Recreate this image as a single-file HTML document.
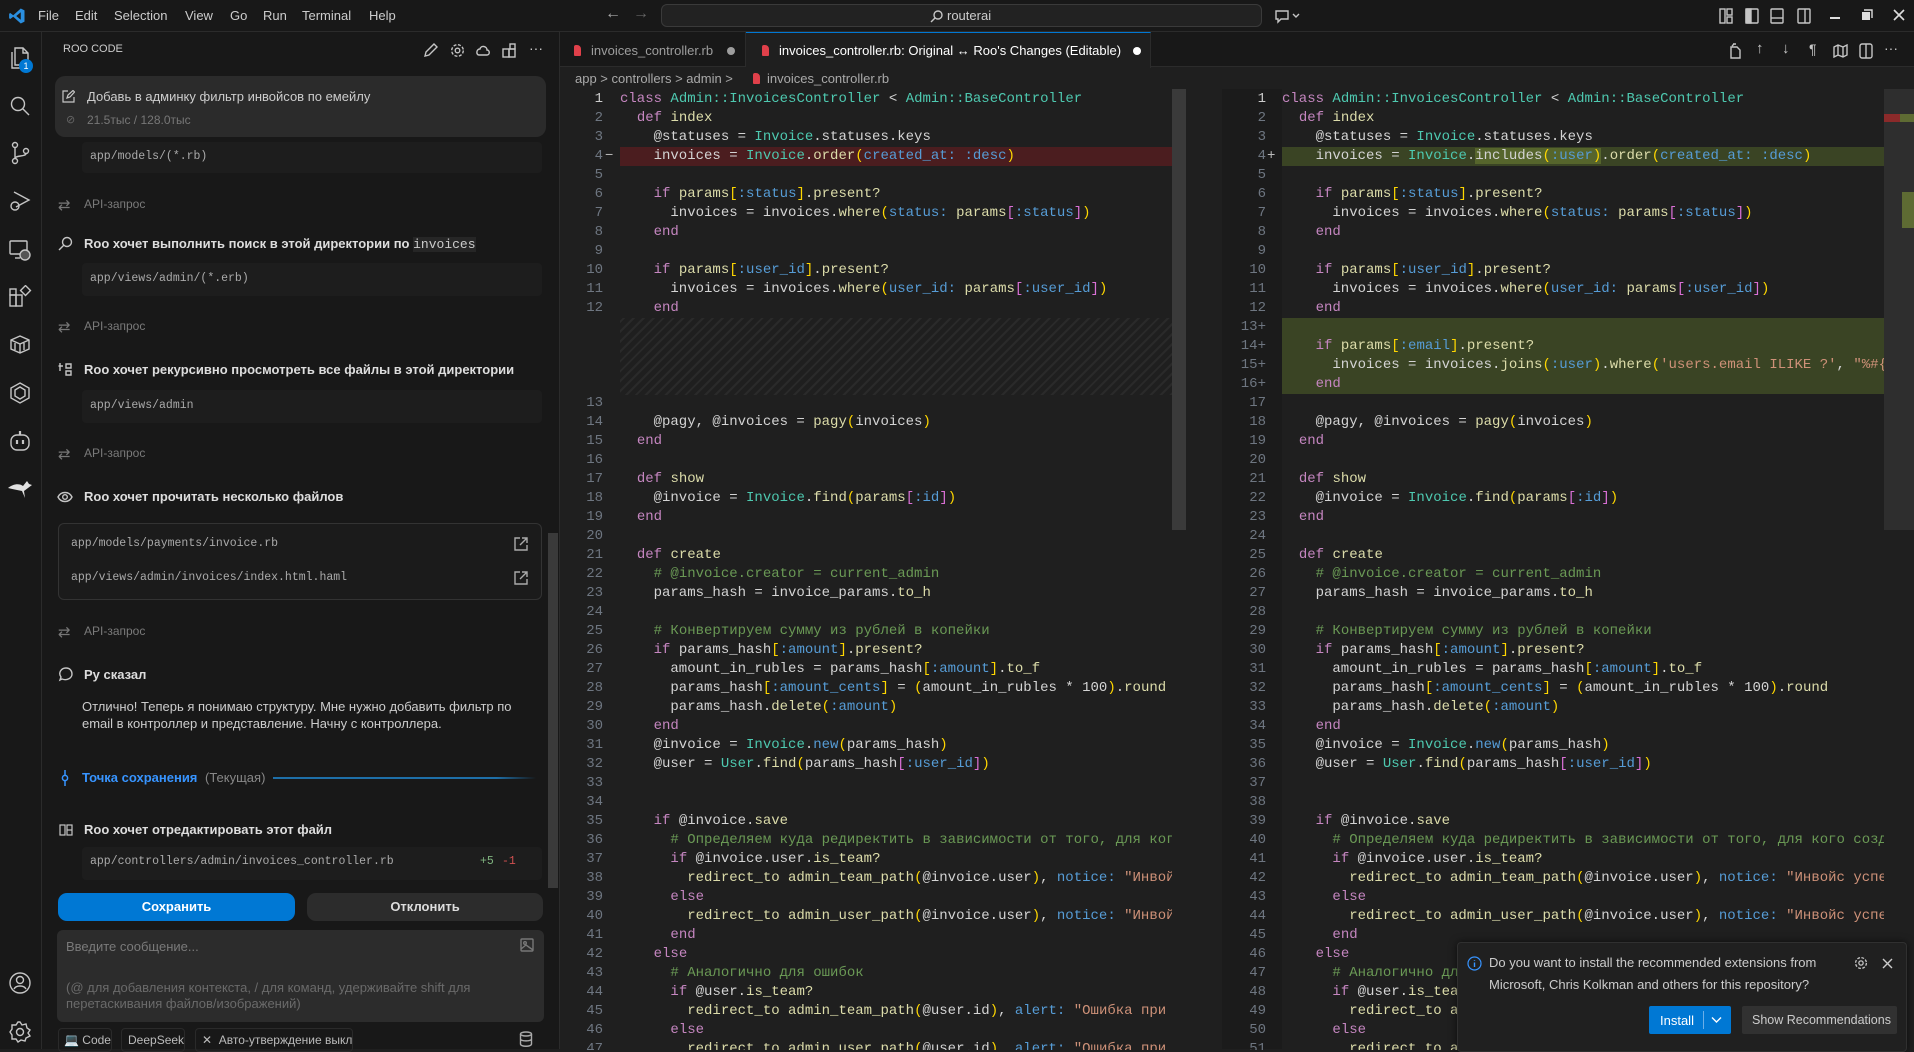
<!DOCTYPE html>
<html><head><meta charset="utf-8">
<style>
*{box-sizing:border-box;margin:0;padding:0}
body{width:1914px;height:1049px;overflow:hidden;background:#1f1f1f;font-family:"Liberation Sans","DejaVu Sans",sans-serif;color:#ccc;position:relative}
.abs{position:absolute}
#title{left:0;top:0;width:1914px;height:32px;background:#181818;border-bottom:1px solid #2b2b2b}
.menu{top:8px;font-size:13px;color:#ccc}
#act{left:0;top:32px;width:42px;height:1017px;background:#181818;border-right:1px solid #2b2b2b}
#side{left:42px;top:32px;width:518px;height:1017px;background:#181818;border-right:1px solid #2b2b2b}
.sb{font-size:13px;color:#ccc;white-space:nowrap}
.api{font-size:12px;color:#7a7a7a}
.hd{font-size:13px;font-weight:bold;color:#ddd}
.box{background:#1d1d1d;border-radius:4px}
.mono{font-family:"Liberation Mono",monospace;font-size:11.5px;color:#aaa}
#tabs{left:560px;top:32px;width:1354px;height:35px;background:#181818;border-bottom:1px solid #2b2b2b}
.pane{position:absolute;top:90px;height:960px;overflow:hidden;font-family:"Liberation Mono","DejaVu Sans Mono",monospace;font-size:14px;color:#d4d4d4}
.r{position:absolute;left:0;right:0;height:19px;line-height:19px;white-space:pre}
.n{position:absolute;left:0;text-align:right;color:#6e7681}
.t{position:absolute}
#L .n{width:43px}#L .t{left:60px}
#R .n{width:44px}#R .t{left:60px}
i{font-style:normal}
.k{color:#c586c0}.c{color:#4ec9b0}.f{color:#dcdcaa}.s{color:#569cd6}.y{color:#ffd700}.p{color:#da70d6}.cm{color:#6a9955}.st{color:#ce9178}
.del{background:#4b1d1f}
.add{background:#3a4424}
u{text-decoration:none;background:#56652c}
.ic{position:absolute;stroke:#c5c5c5;fill:none;stroke-width:1.4}
</style></head><body>

<!-- title bar -->
<div id="title" class="abs">
<svg class="abs" style="left:8px;top:7px" width="18" height="18" viewBox="0 0 24 24"><path d="M17 2 L22 4.5 V19.5 L17 22 L7 13 L3 16 L1.5 15 V9 L3 8 L7 11 L17 2 Z M17 7 L11 12 L17 17 Z" fill="#2a8fe0"/></svg>
<span class="abs menu" style="left:38px">File</span>
<span class="abs menu" style="left:75px">Edit</span>
<span class="abs menu" style="left:114px">Selection</span>
<span class="abs menu" style="left:185px">View</span>
<span class="abs menu" style="left:230px">Go</span>
<span class="abs menu" style="left:263px">Run</span>
<span class="abs menu" style="left:302px">Terminal</span>
<span class="abs menu" style="left:369px">Help</span>
<span class="abs" style="left:605px;top:5px;font-size:16px;color:#aaa">←</span>
<span class="abs" style="left:633px;top:5px;font-size:16px;color:#666">→</span>
<div class="abs" style="left:661px;top:4px;width:601px;height:23px;background:#222;border:1px solid #3a3a3a;border-radius:6px"></div>
<svg class="ic" style="left:930px;top:9px" width="14" height="14" viewBox="0 0 14 14"><circle cx="8" cy="6" r="4"/><path d="M5 9 L1 13"/></svg>
<span class="abs" style="left:947px;top:8px;font-size:13px;color:#ccc">routerai</span>
<svg class="ic" style="left:1274px;top:8px" width="26" height="16" viewBox="0 0 26 16"><path d="M2 3 H14 V11 H7 L4 14 V11 H2 Z"/><path d="M19 6 L22 9 L25 6"/></svg>
<svg class="ic" style="left:1719px;top:8px" width="14" height="16" viewBox="0 0 14 16"><rect x="1" y="1" width="5" height="14"/><rect x="8" y="1" width="5" height="6"/><rect x="8" y="9" width="5" height="6"/></svg>
<svg class="ic" style="left:1745px;top:8px" width="14" height="16" viewBox="0 0 14 16"><rect x="1" y="1" width="12" height="14" rx="1"/><rect x="1" y="1" width="5" height="14" fill="#c5c5c5"/></svg>
<svg class="ic" style="left:1770px;top:8px" width="14" height="16" viewBox="0 0 14 16"><rect x="1" y="1" width="12" height="14" rx="1"/><path d="M1 10 H13"/></svg>
<svg class="ic" style="left:1797px;top:8px" width="14" height="16" viewBox="0 0 14 16"><rect x="1" y="1" width="12" height="14" rx="1"/><path d="M8 1 V15"/></svg>
<div class="abs" style="left:1830px;top:17px;width:10px;height:2px;background:#ddd"></div>
<svg class="abs" style="left:1861px;top:9px" width="12" height="12" viewBox="0 0 12 12"><rect x="1" y="3" width="8" height="8" fill="#ddd"/><path d="M3 1 H11 V9" stroke="#ddd" fill="none" stroke-width="1.4"/></svg>
<svg class="abs" style="left:1893px;top:9px" width="12" height="12" viewBox="0 0 12 12"><path d="M1 1 L11 11 M11 1 L1 11" stroke="#ddd" stroke-width="1.6"/></svg>
</div>

<!-- activity bar -->
<div id="act" class="abs">
<svg class="ic" style="left:7px;top:13px;stroke:#c5c5c5" width="26" height="26" viewBox="0 0 26 26"><path d="M8 3 H16 L21 8 V20 H8 Z M16 3 V8 H21"/><path d="M5 7 V23 H17"/></svg>
<div class="abs" style="left:19px;top:27px;width:14px;height:14px;border-radius:7px;background:#0078d4;color:#fff;font-size:9px;text-align:center;line-height:14px">1</div>
<svg class="ic" style="left:8px;top:62px" width="24" height="24" viewBox="0 0 24 24"><circle cx="10" cy="10" r="6.5"/><path d="M15 15 L21 21"/></svg>
<svg class="ic" style="left:8px;top:109px" width="24" height="24" viewBox="0 0 24 24"><circle cx="7" cy="4" r="2.5"/><circle cx="7" cy="20" r="2.5"/><circle cx="18" cy="10" r="2.5"/><path d="M7 6.5 V17.5 M18 12.5 C18 16 7 14 7 17.5"/></svg>
<svg class="ic" style="left:8px;top:157px" width="24" height="24" viewBox="0 0 24 24"><path d="M6 3 L21 11 L8 18"/><circle cx="7" cy="17" r="4"/></svg>
<svg class="ic" style="left:8px;top:206px" width="24" height="24" viewBox="0 0 24 24"><rect x="2" y="3" width="17" height="13" rx="1"/><path d="M7 20 H12"/><circle cx="17" cy="17" r="5" fill="#555"/></svg>
<svg class="ic" style="left:8px;top:253px" width="24" height="24" viewBox="0 0 24 24"><rect x="2" y="10" width="6" height="11"/><rect x="8" y="10" width="6" height="11"/><rect x="2" y="4" width="6" height="6"/><rect x="14" y="2" width="7" height="7" transform="rotate(45 17.5 5.5)"/></svg>
<svg class="ic" style="left:8px;top:300px" width="24" height="24" viewBox="0 0 24 24"><path d="M3 8 L12 4 L21 8 V17 L12 21 L3 17 Z M3 8 L12 12 L21 8 M12 12 V21 M7 11 V18 M16 11 V18"/></svg>
<svg class="ic" style="left:8px;top:349px" width="24" height="24" viewBox="0 0 24 24"><path d="M12 2 L21 7 V17 L12 22 L3 17 V7 Z"/><path d="M7 9 L12 6 L17 9 V15 L12 18 L7 15 Z"/></svg>
<svg class="ic" style="left:8px;top:397px" width="24" height="24" viewBox="0 0 24 24"><rect x="3" y="6" width="18" height="15" rx="6"/><path d="M12 2 V6 M9 11 V15 M15 11 V15" stroke-width="2.2"/></svg>
<svg class="abs" style="left:7px;top:446px" width="26" height="22" viewBox="0 0 26 22"><path d="M1 10 C6 6 12 5 16 8 L20 3 L22 6 L25 7 L21 10 L17 13 L18 20 L15 13 C10 12 5 11 1 10 Z" fill="#e0e0e0"/></svg>
<svg class="ic" style="left:8px;top:939px" width="24" height="24" viewBox="0 0 24 24"><circle cx="12" cy="12" r="10"/><circle cx="12" cy="9" r="3.5"/><path d="M6 18 C8 14 16 14 18 18"/></svg>
<svg class="ic" style="left:8px;top:988px" width="24" height="24" viewBox="0 0 24 24"><circle cx="12" cy="12" r="3.5"/><path d="M12 2 L14 5 L18 4 L19 8 L22 10 L20 13 L22 16 L18 18 L17 21 L13 20 L10 22 L8 19 L4 19 L4 15 L2 12 L4 9 L4 5 L8 5 L10 2 Z"/></svg>
</div>

<!-- side panel -->
<div id="side" class="abs"></div>
<span class="abs" style="left:63px;top:43px;font-size:11px;color:#ccc">ROO CODE</span>
<svg class="ic" style="left:423px;top:43px" width="15" height="15" viewBox="0 0 15 15"><path d="M2 13 L3 9 L11 1 L14 4 L6 12 Z"/></svg>
<svg class="ic" style="left:450px;top:43px" width="15" height="15" viewBox="0 0 15 15"><circle cx="7.5" cy="7.5" r="2.3"/><circle cx="7.5" cy="7.5" r="5.8" stroke-dasharray="3 1.6"/></svg>
<svg class="ic" style="left:475px;top:44px" width="16" height="13" viewBox="0 0 16 13"><path d="M4 11 H12 C15 11 15 6 12 6 C12 2 6 1 5 5 C1 5 1 11 4 11 Z"/></svg>
<svg class="ic" style="left:502px;top:43px" width="15" height="15" viewBox="0 0 15 15"><rect x="1" y="6" width="6" height="8"/><rect x="7" y="6" width="6" height="8"/><rect x="8" y="1" width="5" height="5"/></svg>
<span class="abs" style="left:529px;top:40px;font-size:14px;color:#ccc">···</span>

<div class="abs" style="left:55px;top:76px;width:491px;height:61px;background:#2b2b2b;border-radius:10px"></div>
<svg class="ic" style="left:62px;top:90px;stroke-width:1.2" width="13" height="13" viewBox="0 0 13 13"><path d="M6 1 H1 V12 H12 V7 M5 8 L6 5 L11 0.5 L12.5 2 L8 7 Z"/></svg>
<span class="abs sb" style="left:87px;top:89px">Добавь в админку фильтр инвойсов по емейлу</span>
<span class="abs" style="left:66px;top:113px;font-size:11px;color:#666">⊘</span>
<span class="abs" style="left:87px;top:113px;font-size:12px;color:#777">21.5тыс / 128.0тыс</span>

<div class="abs box" style="left:82px;top:142px;width:460px;height:31px"></div>
<span class="abs mono" style="left:90px;top:150px">app/models/(*.rb)</span>

<span class="abs" style="left:58px;top:196px;font-size:15px;color:#777">⇄</span>
<span class="abs api" style="left:84px;top:197px">API-запрос</span>

<svg class="ic" style="left:58px;top:236px" width="15" height="15" viewBox="0 0 15 15"><circle cx="9" cy="6" r="4.5"/><path d="M6 9 L1 14"/></svg>
<span class="abs hd" style="left:84px;top:236px">Roo хочет выполнить поиск в этой директории по <span style="font-family:'Liberation Mono',monospace;font-weight:normal;background:#262626;color:#ccc">invoices</span></span>
<div class="abs box" style="left:82px;top:263px;width:460px;height:33px"></div>
<span class="abs mono" style="left:90px;top:272px">app/views/admin/(*.erb)</span>

<span class="abs" style="left:58px;top:318px;font-size:15px;color:#777">⇄</span>
<span class="abs api" style="left:84px;top:319px">API-запрос</span>
<svg class="ic" style="left:58px;top:362px" width="15" height="15" viewBox="0 0 15 15"><path d="M2 1 V9 M0.5 4 H5 M8 2 H13 V6 H8 Z M8 9 H13 V13 H8 Z"/></svg>
<span class="abs hd" style="left:84px;top:362px">Roo хочет рекурсивно просмотреть все файлы в этой директории</span>
<div class="abs box" style="left:82px;top:390px;width:460px;height:33px"></div>
<span class="abs mono" style="left:90px;top:399px">app/views/admin</span>

<span class="abs" style="left:58px;top:445px;font-size:15px;color:#777">⇄</span>
<span class="abs api" style="left:84px;top:446px">API-запрос</span>
<svg class="ic" style="left:57px;top:490px" width="16" height="14" viewBox="0 0 16 14"><path d="M1 7 C4 1 12 1 15 7 C12 13 4 13 1 7 Z"/><circle cx="8" cy="7" r="2.3"/></svg>
<span class="abs hd" style="left:84px;top:489px">Roo хочет прочитать несколько файлов</span>
<div class="abs" style="left:58px;top:523px;width:484px;height:77px;border:1px solid #333;border-radius:6px;background:#1b1b1b"></div>
<span class="abs mono" style="left:71px;top:537px">app/models/payments/invoice.rb</span>
<span class="abs mono" style="left:71px;top:571px">app/views/admin/invoices/index.html.haml</span>
<svg class="ic" style="left:514px;top:537px;stroke:#aaa" width="14" height="14" viewBox="0 0 14 14"><path d="M6 1 H1 V13 H13 V8 M8 1 H13 V6 M13 1 L6 8"/></svg>
<svg class="ic" style="left:514px;top:571px;stroke:#aaa" width="14" height="14" viewBox="0 0 14 14"><path d="M6 1 H1 V13 H13 V8 M8 1 H13 V6 M13 1 L6 8"/></svg>

<span class="abs" style="left:58px;top:623px;font-size:15px;color:#777">⇄</span>
<span class="abs api" style="left:84px;top:624px">API-запрос</span>
<svg class="ic" style="left:58px;top:667px" width="15" height="15" viewBox="0 0 15 15"><path d="M2 13 L3 10 C0 6 3 1 8 1 C12 1 14 4 14 7 C14 11 9 14 4 12 Z"/></svg>
<span class="abs hd" style="left:84px;top:667px">Ру сказал</span>
<span class="abs sb" style="left:82px;top:699px;color:#ccc">Отлично! Теперь я понимаю структуру. Мне нужно добавить фильтр по</span>
<span class="abs sb" style="left:82px;top:716px;color:#ccc">email в контроллер и представление. Начну с контроллера.</span>

<svg class="abs" style="left:61px;top:770px" width="8" height="16" viewBox="0 0 8 16"><path d="M4 0 V16" stroke="#3794ff" stroke-width="1.5"/><circle cx="4" cy="8" r="2.6" fill="#181818" stroke="#3794ff" stroke-width="1.5"/></svg>
<span class="abs" style="left:82px;top:770px;font-size:13px;font-weight:bold;color:#3794ff">Точка сохранения</span>
<span class="abs" style="left:205px;top:770px;font-size:13px;color:#888">(Текущая)</span>
<div class="abs" style="left:273px;top:777px;width:263px;height:2px;background:linear-gradient(90deg,#1e6fa8,#1e6fa8 85%,#181818)"></div>

<svg class="ic" style="left:59px;top:823px;stroke-width:1.2" width="15" height="14" viewBox="0 0 15 14"><rect x="1" y="2" width="5" height="10"/><rect x="8" y="2" width="5" height="10"/><path d="M8 7 H13"/></svg>
<span class="abs hd" style="left:84px;top:822px">Roo хочет отредактировать этот файл</span>
<div class="abs box" style="left:82px;top:847px;width:460px;height:33px"></div>
<span class="abs mono" style="left:90px;top:855px">app/controllers/admin/invoices_controller.rb</span>
<span class="abs mono" style="left:480px;top:855px;color:#7fb37f">+5</span>
<span class="abs mono" style="left:502px;top:855px;color:#d05050">-1</span>

<div class="abs" style="left:58px;top:893px;width:237px;height:28px;background:#0078d4;border-radius:9px;color:#fff;font-size:13px;font-weight:bold;text-align:center;line-height:28px">Сохранить</div>
<div class="abs" style="left:307px;top:893px;width:236px;height:28px;background:#2c2c2c;border-radius:9px;color:#ddd;font-size:13px;font-weight:bold;text-align:center;line-height:28px">Отклонить</div>

<div class="abs" style="left:57px;top:930px;width:487px;height:92px;background:#2c2c2c;border-radius:6px"></div>
<span class="abs" style="left:66px;top:939px;font-size:13px;color:#7a7a7a">Введите сообщение...</span>
<span class="abs" style="left:66px;top:980px;font-size:13px;color:#6a6a6a">(@ для добавления контекста, / для команд, удерживайте shift для</span>
<span class="abs" style="left:66px;top:996px;font-size:13px;color:#6a6a6a">перетаскивания файлов/изображений)</span>
<svg class="ic" style="left:520px;top:938px;stroke:#777" width="14" height="14" viewBox="0 0 14 14"><rect x="1" y="1" width="12" height="12" rx="1"/><circle cx="5" cy="5" r="1.3"/><path d="M1 11 L6 7 L13 12"/></svg>

<div class="abs" style="left:58px;top:1028px;width:54px;height:24px;border:1px solid #2a2a2a;border-radius:4px"></div>
<span class="abs" style="left:64px;top:1033px;font-size:12px;color:#bbb">💻 Code</span>
<div class="abs" style="left:121px;top:1028px;width:64px;height:24px;border:1px solid #2a2a2a;border-radius:4px"></div>
<span class="abs" style="left:128px;top:1033px;font-size:12px;color:#bbb">DeepSeek</span>
<div class="abs" style="left:195px;top:1028px;width:158px;height:24px;border:1px solid #2a2a2a;border-radius:4px"></div>
<span class="abs" style="left:202px;top:1033px;font-size:12px;color:#bbb">✕&nbsp; Авто-утверждение выкл</span>
<svg class="ic" style="left:519px;top:1031px;stroke:#aaa" width="14" height="16" viewBox="0 0 14 16"><ellipse cx="7" cy="3" rx="5.5" ry="2"/><path d="M1.5 3 V13 C1.5 16 12.5 16 12.5 13 V3 M1.5 8 C1.5 10.5 12.5 10.5 12.5 8"/></svg>
<div class="abs" style="left:548px;top:533px;width:10px;height:355px;background:#3a3a3a"></div>

<!-- tabs -->
<div id="tabs" class="abs"></div>
<div class="abs" style="left:560px;top:32px;width:186px;height:35px;border-right:1px solid #2b2b2b"></div>
<div class="abs" style="left:746px;top:32px;width:405px;height:36px;background:#1f1f1f;border-top:1px solid #0078d4;border-right:1px solid #2b2b2b"></div>
<div class="abs" style="left:574px;top:45px;width:7px;height:11px;background:#e0404a;border-radius:2px 4px 1px 1px"></div>
<span class="abs" style="left:591px;top:43px;font-size:13px;color:#9d9d9d">invoices_controller.rb</span>
<div class="abs" style="left:727px;top:47px;width:8px;height:8px;border-radius:4px;background:#9d9d9d"></div>
<div class="abs" style="left:762px;top:45px;width:7px;height:11px;background:#e0404a;border-radius:2px 4px 1px 1px"></div>
<span class="abs" style="left:779px;top:43px;font-size:13px;color:#fff">invoices_controller.rb: Original ↔ Roo's Changes (Editable)</span>
<div class="abs" style="left:1133px;top:47px;width:8px;height:8px;border-radius:4px;background:#fff"></div>
<svg class="ic" style="left:1728px;top:43px" width="14" height="16" viewBox="0 0 14 16"><path d="M3 4 H9 L12 7 V15 H3 Z M5 1 H8 M6 1 L4 3"/></svg>
<span class="abs" style="left:1756px;top:40px;font-size:15px;color:#c5c5c5">↑</span>
<span class="abs" style="left:1782px;top:40px;font-size:15px;color:#c5c5c5">↓</span>
<span class="abs" style="left:1809px;top:41px;font-size:14px;color:#c5c5c5">¶</span>
<svg class="ic" style="left:1833px;top:44px" width="15" height="14" viewBox="0 0 15 14"><path d="M1 3 L5 1 L10 3 L14 1 V11 L10 13 L5 11 L1 13 Z M5 1 V11 M10 3 V13"/></svg>
<svg class="ic" style="left:1859px;top:43px" width="14" height="16" viewBox="0 0 14 16"><rect x="1" y="1" width="12" height="14" rx="2"/><path d="M7 1 V15"/></svg>
<span class="abs" style="left:1884px;top:40px;font-size:14px;color:#c5c5c5">···</span>

<!-- breadcrumb -->
<span class="abs" style="left:575px;top:71px;font-size:13px;color:#a9a9a9">app &gt; controllers &gt; admin &gt;</span>
<div class="abs" style="left:753px;top:73px;width:7px;height:11px;background:#e0404a;border-radius:2px 4px 1px 1px"></div>
<span class="abs" style="left:767px;top:71px;font-size:13px;color:#a9a9a9">invoices_controller.rb</span>

<!-- overview/pane chrome -->
<div class="abs" style="left:1186px;top:89px;width:36px;height:960px;background:#1f1f1f"></div>
<div class="abs" style="left:1172px;top:89px;width:14px;height:441px;background:#3a3a3a"></div>
<div class="abs" style="left:1222px;top:89px;width:60px;height:960px;background:#1b1b1b"></div>
<div class="abs" style="left:1884px;top:89px;width:30px;height:441px;background:#2e2e2e"></div>
<div class="abs" style="left:1884px;top:114px;width:16px;height:8px;background:#8b2a2a"></div>
<div class="abs" style="left:1900px;top:114px;width:14px;height:8px;background:#5e6b33"></div>
<div class="abs" style="left:1902px;top:192px;width:12px;height:36px;background:#5e6b33"></div>

<!-- LEFT pane -->
<div id="L" class="pane" style="left:560px;width:612px">
<div class="r" style="top:0"><span class="n" style="color:#ccc">1</span><span class="t"><i class=k>class</i> <i class=c>Admin::InvoicesController</i> &lt; <i class=c>Admin::BaseController</i></span></div>
<div class="r" style="top:19px"><span class="n">2</span><span class="t">  <i class=k>def</i> <i class=f>index</i></span></div>
<div class="r" style="top:38px"><span class="n">3</span><span class="t">    @statuses = <i class=c>Invoice</i>.statuses.keys</span></div>
<div class="r del" style="top:57px;left:60px"></div>
<div class="r" style="top:57px"><span class="n">4</span><span style="position:absolute;left:45px;color:#bbb">−</span><span class="t">    invoices = <i class=c>Invoice</i>.<i class=f>order</i><i class=y>(</i><i class=s>created_at: :desc</i><i class=y>)</i></span></div>
<div class="r" style="top:76px"><span class="n">5</span></div>
<div class="r" style="top:95px"><span class="n">6</span><span class="t">    <i class=k>if</i> <i class=f>params</i><i class=y>[</i><i class=s>:status</i><i class=y>]</i>.<i class=f>present?</i></span></div>
<div class="r" style="top:114px"><span class="n">7</span><span class="t">      invoices = invoices.<i class=f>where</i><i class=y>(</i><i class=s>status:</i> <i class=f>params</i><i class=p>[</i><i class=s>:status</i><i class=p>]</i><i class=y>)</i></span></div>
<div class="r" style="top:133px"><span class="n">8</span><span class="t">    <i class=k>end</i></span></div>
<div class="r" style="top:152px"><span class="n">9</span></div>
<div class="r" style="top:171px"><span class="n">10</span><span class="t">    <i class=k>if</i> <i class=f>params</i><i class=y>[</i><i class=s>:user_id</i><i class=y>]</i>.<i class=f>present?</i></span></div>
<div class="r" style="top:190px"><span class="n">11</span><span class="t">      invoices = invoices.<i class=f>where</i><i class=y>(</i><i class=s>user_id:</i> <i class=f>params</i><i class=p>[</i><i class=s>:user_id</i><i class=p>]</i><i class=y>)</i></span></div>
<div class="r" style="top:209px"><span class="n">12</span><span class="t">    <i class=k>end</i></span></div>
<div style="position:absolute;top:228px;left:60px;right:0;height:77px;background:repeating-linear-gradient(-45deg,#2a2a2a 0 2px,#1f1f1f 2px 7px)"></div>
<div class="r" style="top:304px"><span class="n">13</span></div>
<div class="r" style="top:323px"><span class="n">14</span><span class="t">    @pagy, @invoices = <i class=f>pagy</i><i class=y>(</i>invoices<i class=y>)</i></span></div>
<div class="r" style="top:342px"><span class="n">15</span><span class="t">  <i class=k>end</i></span></div>
<div class="r" style="top:361px"><span class="n">16</span></div>
<div class="r" style="top:380px"><span class="n">17</span><span class="t">  <i class=k>def</i> <i class=f>show</i></span></div>
<div class="r" style="top:399px"><span class="n">18</span><span class="t">    @invoice = <i class=c>Invoice</i>.<i class=f>find</i><i class=y>(</i><i class=f>params</i><i class=p>[</i><i class=s>:id</i><i class=p>]</i><i class=y>)</i></span></div>
<div class="r" style="top:418px"><span class="n">19</span><span class="t">  <i class=k>end</i></span></div>
<div class="r" style="top:437px"><span class="n">20</span></div>
<div class="r" style="top:456px"><span class="n">21</span><span class="t">  <i class=k>def</i> <i class=f>create</i></span></div>
<div class="r" style="top:475px"><span class="n">22</span><span class="t">    <i class=cm># @invoice.creator = current_admin</i></span></div>
<div class="r" style="top:494px"><span class="n">23</span><span class="t">    params_hash = invoice_params.<i class=f>to_h</i></span></div>
<div class="r" style="top:513px"><span class="n">24</span></div>
<div class="r" style="top:532px"><span class="n">25</span><span class="t">    <i class=cm># Конвертируем сумму из рублей в копейки</i></span></div>
<div class="r" style="top:551px"><span class="n">26</span><span class="t">    <i class=k>if</i> params_hash<i class=y>[</i><i class=s>:amount</i><i class=y>]</i>.<i class=f>present?</i></span></div>
<div class="r" style="top:570px"><span class="n">27</span><span class="t">      amount_in_rubles = params_hash<i class=y>[</i><i class=s>:amount</i><i class=y>]</i>.<i class=f>to_f</i></span></div>
<div class="r" style="top:589px"><span class="n">28</span><span class="t">      params_hash<i class=y>[</i><i class=s>:amount_cents</i><i class=y>]</i> = <i class=y>(</i>amount_in_rubles * 100<i class=y>)</i>.<i class=f>round</i></span></div>
<div class="r" style="top:608px"><span class="n">29</span><span class="t">      params_hash.<i class=f>delete</i><i class=y>(</i><i class=s>:amount</i><i class=y>)</i></span></div>
<div class="r" style="top:627px"><span class="n">30</span><span class="t">    <i class=k>end</i></span></div>
<div class="r" style="top:646px"><span class="n">31</span><span class="t">    @invoice = <i class=c>Invoice</i>.<i class=s>new</i><i class=y>(</i>params_hash<i class=y>)</i></span></div>
<div class="r" style="top:665px"><span class="n">32</span><span class="t">    @user = <i class=c>User</i>.<i class=f>find</i><i class=y>(</i>params_hash<i class=p>[</i><i class=s>:user_id</i><i class=p>]</i><i class=y>)</i></span></div>
<div class="r" style="top:684px"><span class="n">33</span></div>
<div class="r" style="top:703px"><span class="n">34</span></div>
<div class="r" style="top:722px"><span class="n">35</span><span class="t">    <i class=k>if</i> @invoice.<i class=f>save</i></span></div>
<div class="r" style="top:741px"><span class="n">36</span><span class="t">      <i class=cm># Определяем куда редиректить в зависимости от того, для кого создан инвойс</i></span></div>
<div class="r" style="top:760px"><span class="n">37</span><span class="t">      <i class=k>if</i> @invoice.user.<i class=f>is_team?</i></span></div>
<div class="r" style="top:779px"><span class="n">38</span><span class="t">        <i class=f>redirect_to admin_team_path</i><i class=y>(</i>@invoice.user<i class=y>)</i>, <i class=s>notice:</i> <i class=st>"Инвойс успешно создан"</i></span></div>
<div class="r" style="top:798px"><span class="n">39</span><span class="t">      <i class=k>else</i></span></div>
<div class="r" style="top:817px"><span class="n">40</span><span class="t">        <i class=f>redirect_to admin_user_path</i><i class=y>(</i>@invoice.user<i class=y>)</i>, <i class=s>notice:</i> <i class=st>"Инвойс успешно создан"</i></span></div>
<div class="r" style="top:836px"><span class="n">41</span><span class="t">      <i class=k>end</i></span></div>
<div class="r" style="top:855px"><span class="n">42</span><span class="t">    <i class=k>else</i></span></div>
<div class="r" style="top:874px"><span class="n">43</span><span class="t">      <i class=cm># Аналогично для ошибок</i></span></div>
<div class="r" style="top:893px"><span class="n">44</span><span class="t">      <i class=k>if</i> @user.<i class=f>is_team?</i></span></div>
<div class="r" style="top:912px"><span class="n">45</span><span class="t">        <i class=f>redirect_to admin_team_path</i><i class=y>(</i>@user.id<i class=y>)</i>, <i class=s>alert:</i> <i class=st>"Ошибка при создании"</i></span></div>
<div class="r" style="top:931px"><span class="n">46</span><span class="t">      <i class=k>else</i></span></div>
<div class="r" style="top:950px"><span class="n">47</span><span class="t">        <i class=f>redirect_to admin_user_path</i><i class=y>(</i>@user.id<i class=y>)</i>, <i class=s>alert:</i> <i class=st>"Ошибка при создании"</i></span></div>
</div>

<!-- RIGHT pane -->
<div id="R" class="pane" style="left:1222px;width:662px">
<div class="r" style="top:0"><span class="n" style="color:#ccc">1</span><span class="t"><i class=k>class</i> <i class=c>Admin::InvoicesController</i> &lt; <i class=c>Admin::BaseController</i></span></div>
<div class="r" style="top:19px"><span class="n">2</span><span class="t">  <i class=k>def</i> <i class=f>index</i></span></div>
<div class="r" style="top:38px"><span class="n">3</span><span class="t">    @statuses = <i class=c>Invoice</i>.statuses.keys</span></div>
<div class="r add" style="top:57px;left:60px"></div>
<div class="r" style="top:57px"><span class="n">4</span><span style="position:absolute;left:45px;color:#bbb">+</span><span class="t">    invoices = <i class=c>Invoice</i>.<u>includes<i class=y>(</i><i class=s>:user</i><i class=y>)</i></u>.<i class=f>order</i><i class=y>(</i><i class=s>created_at: :desc</i><i class=y>)</i></span></div>
<div class="r" style="top:76px"><span class="n">5</span></div>
<div class="r" style="top:95px"><span class="n">6</span><span class="t">    <i class=k>if</i> <i class=f>params</i><i class=y>[</i><i class=s>:status</i><i class=y>]</i>.<i class=f>present?</i></span></div>
<div class="r" style="top:114px"><span class="n">7</span><span class="t">      invoices = invoices.<i class=f>where</i><i class=y>(</i><i class=s>status:</i> <i class=f>params</i><i class=p>[</i><i class=s>:status</i><i class=p>]</i><i class=y>)</i></span></div>
<div class="r" style="top:133px"><span class="n">8</span><span class="t">    <i class=k>end</i></span></div>
<div class="r" style="top:152px"><span class="n">9</span></div>
<div class="r" style="top:171px"><span class="n">10</span><span class="t">    <i class=k>if</i> <i class=f>params</i><i class=y>[</i><i class=s>:user_id</i><i class=y>]</i>.<i class=f>present?</i></span></div>
<div class="r" style="top:190px"><span class="n">11</span><span class="t">      invoices = invoices.<i class=f>where</i><i class=y>(</i><i class=s>user_id:</i> <i class=f>params</i><i class=p>[</i><i class=s>:user_id</i><i class=p>]</i><i class=y>)</i></span></div>
<div class="r" style="top:209px"><span class="n">12</span><span class="t">    <i class=k>end</i></span></div>
<div style="position:absolute;top:228px;left:60px;right:0;height:76px;background:#3a4424"></div>
<div class="r" style="top:228px"><span class="n">13+</span></div>
<div class="r" style="top:247px"><span class="n">14+</span><span class="t">    <i class=k>if</i> <i class=f>params</i><i class=y>[</i><i class=s>:email</i><i class=y>]</i>.<i class=f>present?</i></span></div>
<div class="r" style="top:266px"><span class="n">15+</span><span class="t">      invoices = invoices.<i class=f>joins</i><i class=y>(</i><i class=s>:user</i><i class=y>)</i>.<i class=f>where</i><i class=y>(</i><i class=st>'users.email ILIKE ?'</i>, <i class=st>"%#{params[:email]}%"</i><i class=y>)</i></span></div>
<div class="r" style="top:285px"><span class="n">16+</span><span class="t">    <i class=k>end</i></span></div>
<div class="r" style="top:304px"><span class="n">17</span></div>
<div class="r" style="top:323px"><span class="n">18</span><span class="t">    @pagy, @invoices = <i class=f>pagy</i><i class=y>(</i>invoices<i class=y>)</i></span></div>
<div class="r" style="top:342px"><span class="n">19</span><span class="t">  <i class=k>end</i></span></div>
<div class="r" style="top:361px"><span class="n">20</span></div>
<div class="r" style="top:380px"><span class="n">21</span><span class="t">  <i class=k>def</i> <i class=f>show</i></span></div>
<div class="r" style="top:399px"><span class="n">22</span><span class="t">    @invoice = <i class=c>Invoice</i>.<i class=f>find</i><i class=y>(</i><i class=f>params</i><i class=p>[</i><i class=s>:id</i><i class=p>]</i><i class=y>)</i></span></div>
<div class="r" style="top:418px"><span class="n">23</span><span class="t">  <i class=k>end</i></span></div>
<div class="r" style="top:437px"><span class="n">24</span></div>
<div class="r" style="top:456px"><span class="n">25</span><span class="t">  <i class=k>def</i> <i class=f>create</i></span></div>
<div class="r" style="top:475px"><span class="n">26</span><span class="t">    <i class=cm># @invoice.creator = current_admin</i></span></div>
<div class="r" style="top:494px"><span class="n">27</span><span class="t">    params_hash = invoice_params.<i class=f>to_h</i></span></div>
<div class="r" style="top:513px"><span class="n">28</span></div>
<div class="r" style="top:532px"><span class="n">29</span><span class="t">    <i class=cm># Конвертируем сумму из рублей в копейки</i></span></div>
<div class="r" style="top:551px"><span class="n">30</span><span class="t">    <i class=k>if</i> params_hash<i class=y>[</i><i class=s>:amount</i><i class=y>]</i>.<i class=f>present?</i></span></div>
<div class="r" style="top:570px"><span class="n">31</span><span class="t">      amount_in_rubles = params_hash<i class=y>[</i><i class=s>:amount</i><i class=y>]</i>.<i class=f>to_f</i></span></div>
<div class="r" style="top:589px"><span class="n">32</span><span class="t">      params_hash<i class=y>[</i><i class=s>:amount_cents</i><i class=y>]</i> = <i class=y>(</i>amount_in_rubles * 100<i class=y>)</i>.<i class=f>round</i></span></div>
<div class="r" style="top:608px"><span class="n">33</span><span class="t">      params_hash.<i class=f>delete</i><i class=y>(</i><i class=s>:amount</i><i class=y>)</i></span></div>
<div class="r" style="top:627px"><span class="n">34</span><span class="t">    <i class=k>end</i></span></div>
<div class="r" style="top:646px"><span class="n">35</span><span class="t">    @invoice = <i class=c>Invoice</i>.<i class=s>new</i><i class=y>(</i>params_hash<i class=y>)</i></span></div>
<div class="r" style="top:665px"><span class="n">36</span><span class="t">    @user = <i class=c>User</i>.<i class=f>find</i><i class=y>(</i>params_hash<i class=p>[</i><i class=s>:user_id</i><i class=p>]</i><i class=y>)</i></span></div>
<div class="r" style="top:684px"><span class="n">37</span></div>
<div class="r" style="top:703px"><span class="n">38</span></div>
<div class="r" style="top:722px"><span class="n">39</span><span class="t">    <i class=k>if</i> @invoice.<i class=f>save</i></span></div>
<div class="r" style="top:741px"><span class="n">40</span><span class="t">      <i class=cm># Определяем куда редиректить в зависимости от того, для кого создан инвойс</i></span></div>
<div class="r" style="top:760px"><span class="n">41</span><span class="t">      <i class=k>if</i> @invoice.user.<i class=f>is_team?</i></span></div>
<div class="r" style="top:779px"><span class="n">42</span><span class="t">        <i class=f>redirect_to admin_team_path</i><i class=y>(</i>@invoice.user<i class=y>)</i>, <i class=s>notice:</i> <i class=st>"Инвойс успешно создан"</i></span></div>
<div class="r" style="top:798px"><span class="n">43</span><span class="t">      <i class=k>else</i></span></div>
<div class="r" style="top:817px"><span class="n">44</span><span class="t">        <i class=f>redirect_to admin_user_path</i><i class=y>(</i>@invoice.user<i class=y>)</i>, <i class=s>notice:</i> <i class=st>"Инвойс успешно создан"</i></span></div>
<div class="r" style="top:836px"><span class="n">45</span><span class="t">      <i class=k>end</i></span></div>
<div class="r" style="top:855px"><span class="n">46</span><span class="t">    <i class=k>else</i></span></div>
<div class="r" style="top:874px"><span class="n">47</span><span class="t">      <i class=cm># Аналогично для ошибок</i></span></div>
<div class="r" style="top:893px"><span class="n">48</span><span class="t">      <i class=k>if</i> @user.<i class=f>is_team?</i></span></div>
<div class="r" style="top:912px"><span class="n">49</span><span class="t">        <i class=f>redirect_to admin_team_path</i><i class=y>(</i>@user.id<i class=y>)</i>, <i class=s>alert:</i> <i class=st>"Ошибка при создании"</i></span></div>
<div class="r" style="top:931px"><span class="n">50</span><span class="t">      <i class=k>else</i></span></div>
<div class="r" style="top:950px"><span class="n">51</span><span class="t">        <i class=f>redirect_to admin_user_path</i><i class=y>(</i>@user.id<i class=y>)</i></span></div>
</div>

<!-- notification -->
<div class="abs" style="left:1457px;top:942px;width:450px;height:110px;background:#202020;border:1px solid #303030;border-radius:4px;box-shadow:0 0 8px rgba(0,0,0,.6)"></div>
<svg class="abs" style="left:1467px;top:956px" width="15" height="15" viewBox="0 0 15 15"><circle cx="7.5" cy="7.5" r="6.5" fill="none" stroke="#3794ff" stroke-width="1.2"/><path d="M7.5 6.5 V11 M7.5 4 V4.8" stroke="#3794ff" stroke-width="1.4"/></svg>
<span class="abs" style="left:1489px;top:955px;font-size:13px;color:#ccc">Do you want to install the recommended extensions from</span>
<span class="abs" style="left:1489px;top:977px;font-size:13px;color:#ccc">Microsoft, Chris Kolkman and others for this repository?</span>
<svg class="ic" style="left:1854px;top:956px" width="14" height="14" viewBox="0 0 15 15"><circle cx="7.5" cy="7.5" r="2.3"/><circle cx="7.5" cy="7.5" r="5.8" stroke-dasharray="3 1.6"/></svg>
<svg class="abs" style="left:1882px;top:958px" width="11" height="11" viewBox="0 0 11 11"><path d="M1 1 L10 10 M10 1 L1 10" stroke="#ccc" stroke-width="1.4"/></svg>
<div class="abs" style="left:1649px;top:1006px;width:82px;height:28px;background:#0078d4;border-radius:2px"></div>
<span class="abs" style="left:1660px;top:1013px;font-size:13px;color:#fff">Install</span>
<div class="abs" style="left:1703px;top:1011px;width:1px;height:18px;background:#6aaee8"></div>
<svg class="abs" style="left:1711px;top:1016px" width="11" height="8" viewBox="0 0 11 8"><path d="M1 1.5 L5.5 6 L10 1.5" stroke="#fff" fill="none" stroke-width="1.4"/></svg>
<div class="abs" style="left:1742px;top:1006px;width:155px;height:28px;background:#313131;border-radius:2px"></div>
<span class="abs" style="left:1752px;top:1013px;font-size:12.5px;color:#ccc">Show Recommendations</span>

</body></html>
